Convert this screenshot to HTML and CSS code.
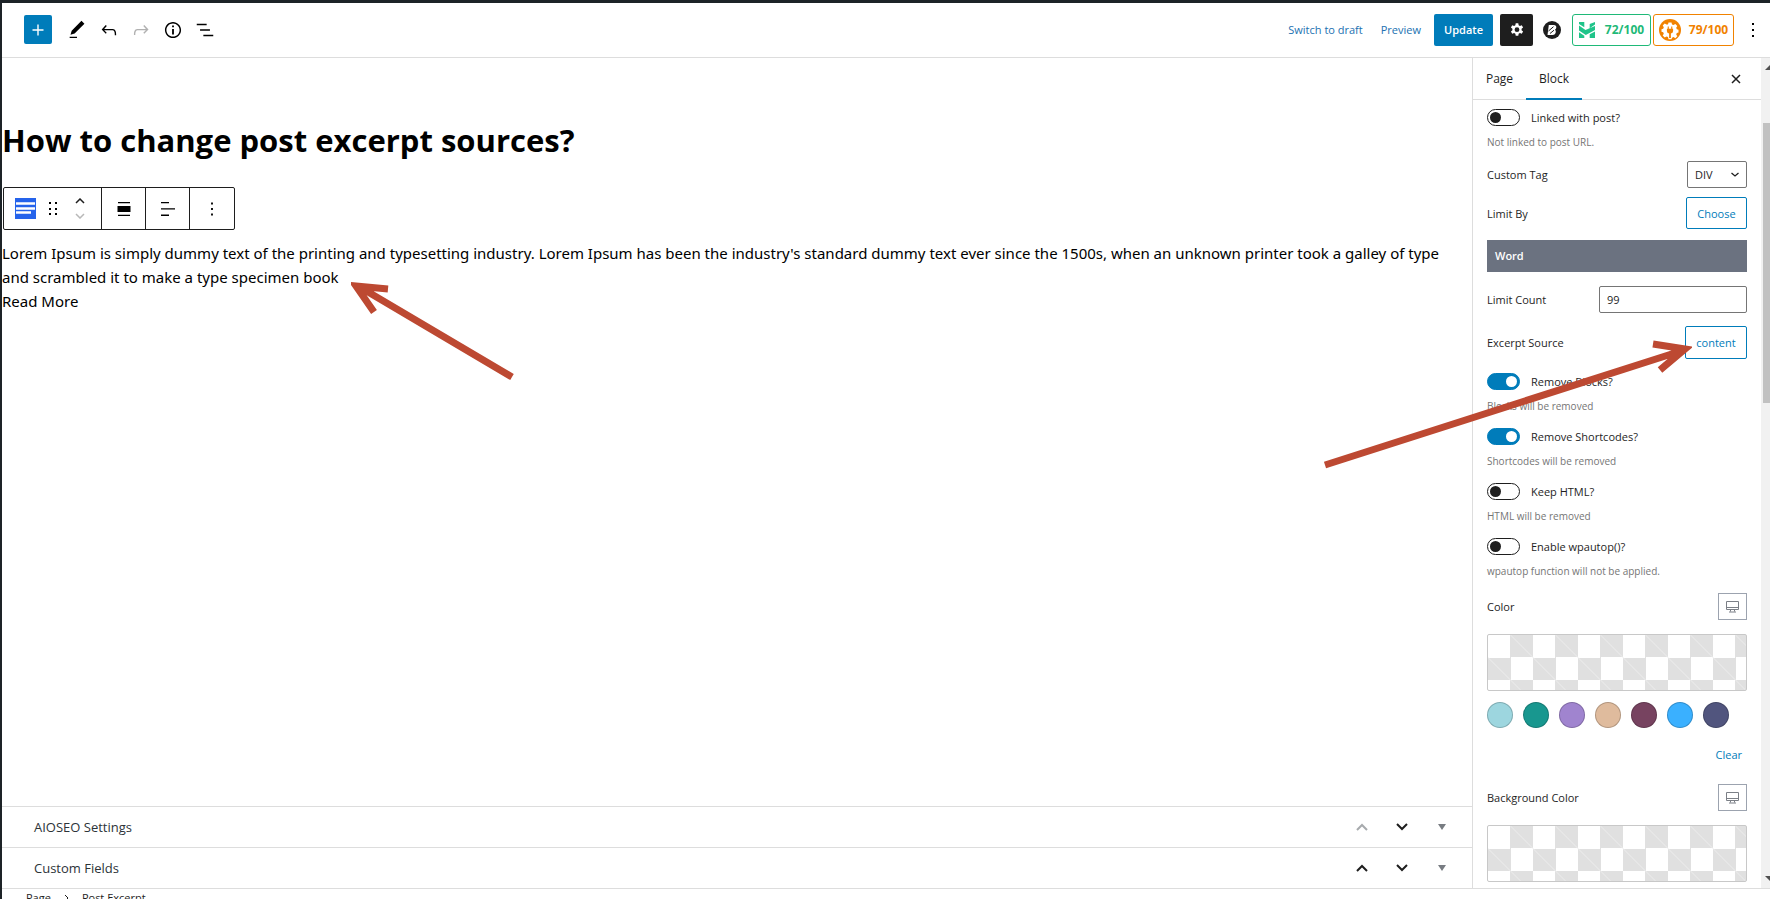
FILE: index.html
```html
<!DOCTYPE html>
<html lang="en">
<head>
<meta charset="utf-8">
<title>Edit Page</title>
<link rel="stylesheet" href="styles.css">
</head>
<body>
<div class="app">
  <header class="topbar">
    <div class="tools">
      <button class="inserter" aria-label="Add block"><svg viewBox="0 0 24 24" width="24" height="24"><path d="M17.500 11.300h-4.800V6.500h-1.400v4.800H6.500v1.400h4.800v4.800h1.400v-4.800h4.800z" fill="#fff"/></svg></button>
      <button class="tool" aria-label="Tools"><svg viewBox="0 0 24 24" width="22" height="22"><path d="M20.100 5.100L16.900 2 6.200 12.700l-1.300 4.400 4.500-1.300L20.100 5.100zM4 20.800h8v-1.500H4v1.500z"/></svg></button>
      <button class="tool" aria-label="Undo"><svg viewBox="0 0 24 24" width="22" height="22"><path d="M18.300 11.700c-.6-.6-1.400-.9-2.300-.9H6.700l2.900-3.300-1.100-1-4.500 5L8.500 16l1-1-2.700-2.700H16c.5 0 .9.200 1.300.5 1 1 1 3.400 1 4.500v.3h1.500v-.2c0-1.500 0-4.300-1.500-5.700z"/></svg></button>
      <button class="tool" aria-label="Redo" disabled><svg viewBox="0 0 24 24" width="22" height="22"><path d="M15.600 6.500l-1.100 1 2.900 3.300H8c-.9 0-1.700.3-2.300.9-1.400 1.500-1.400 4.200-1.400 5.600v.2h1.500v-.3c0-1.100 0-3.500 1-4.500.3-.3.7-.5 1.300-.5h9.200L14.500 15l1.100 1.100 4.600-4.600-4.600-5z"/></svg></button>
      <button class="tool" aria-label="Details"><svg viewBox="0 0 24 24" width="22" height="22"><path d="M12 3.200c-4.800 0-8.800 3.900-8.800 8.800 0 4.800 3.900 8.800 8.800 8.800 4.800 0 8.800-3.900 8.800-8.800 0-4.800-4-8.800-8.800-8.800zm0 16c-4 0-7.200-3.300-7.200-7.200C4.800 8 8 4.800 12 4.800s7.200 3.300 7.200 7.200c0 4-3.200 7.200-7.200 7.200zM11 17h2v-6h-2v6zm0-8h2V7h-2v2z"/></svg></button>
      <button class="tool" aria-label="List view"><svg viewBox="0 0 24 24" width="22" height="22"><path d="M13.800 5.200H3v1.500h10.800V5.200zm-3.600 12v1.500H21v-1.500H10.200zm7.200-6H6.600v1.500h10.800v-1.500z"/></svg></button>
    </div>
    <div class="actions">
      <a href="#" class="text-link">Switch to draft</a>
      <a href="#" class="text-link">Preview</a>
      <button class="update">Update</button>
      <button class="settings" aria-label="Settings"><svg viewBox="0 0 24 24" width="18" height="18"><path fill="#fff" fill-rule="evenodd" d="M10.300 3h3.400l.5 2.500 1.700 1 2.500-.9 1.700 3-2 1.700v2l2 1.700-1.700 3-2.500-.9-1.700 1-.5 2.500h-3.400l-.5-2.500-1.700-1-2.500.9-1.700-3 2-1.700v-2l-2-1.700 1.700-3 2.500.9 1.700-1zM12 8.300a3.200 3.200 0 1 0 0 6.400 3.200 3.200 0 0 0 0-6.400z"/></svg></button>
      <button class="round" aria-label="Blocks panel"><svg viewBox="0 0 18 18" width="18" height="18"><circle cx="9" cy="9" r="9" fill="#1e1e1e"/><path fill="#fff" d="M5.800 4h5q2.700.2 2.500 2.500-.1 1.500-1.300 2.200 1 .8.800 2.200-.4 3-3.300 3.100H4.500z"/><path d="M5.500 10l5-4.300M7 12.500l4-3.300" stroke="#1e1e1e" stroke-width="1"/></svg></button>
      <button class="score green"><svg viewBox="0 0 16 16" width="16" height="16"><path fill="#1fc48a" d="M0 0h5.300v5.200L0 2zM10.700 2L16 0v2.600l-5.300 3.600zM0 3.600l6.500 4.300L16 3.900v4L6.800 13 0 8.500zM0 10.300l5.300 3.500V16H0zM10.700 12.300L16 9.400V16h-5.300z"/></svg><span>72/100</span></button>
      <button class="score orange"><svg viewBox="0 0 22 22" width="22" height="22"><circle cx="11" cy="11" r="11" fill="#f18200"/><path fill="#fff" d="M9.500 3.500h3l.5 2 1.500.6 1.800-1.100 2 2-1.100 1.800.6 1.500 1.700.5v2.600l-1.700.5-.6 1.500 1.100 1.800-2 2-1.800-1.100-1.500.6-.5 1.500h-3L9 18.100l-1.500-.6-1.800 1.100-2-2 1.100-1.800-.6-1.500-1.700-.5v-2.600l1.700-.5.6-1.500-1.100-1.800 2-2 1.800 1.100L9 5.500z"/><path fill="#f18200" d="M8.700 7.500h1.100v2.300h2.400V7.500h1.100v2.300h.8v2.200q0 2-2.200 2.600V19h-1.800v-4.400Q7.900 14 7.900 12V9.800h.8z"/></svg><span>79/100</span></button>
      <button class="more" aria-label="Options"><svg viewBox="0 0 24 24" width="24" height="24"><path d="M13 19h-2v-2h2v2zm0-6h-2v-2h2v2zm0-6h-2V5h2v2z"/></svg></button>
    </div>
  </header>
  <div class="body">
    <main class="main">
      <div class="canvas">
        <h1 class="title">How to change post excerpt sources?</h1>
        <div class="block-toolbar">
          <div class="group first">
            <button class="tb-btn" aria-label="Post excerpt"><svg viewBox="0 0 21 21" width="21" height="21"><path fill="#2563eb" d="M0 0h21v21H0z"/><path d="M1 5.500h19M1 10.500h19M1 14.500h15" stroke="#fff" stroke-width="2.400"/></svg></button>
            <button class="tb-btn" aria-label="Drag"><svg viewBox="0 0 8 14" width="8" height="14"><path d="M0 0h2v2H0zM6 0h2v2H6zM0 6h2v2H0zM6 6h2v2H6zM0 11h2v2H0zM6 11h2v2H6z"/></svg></button>
            <div class="movers">
              <button class="tb-btn" aria-label="Move up"><svg viewBox="0 0 10 6" width="10" height="6"><path d="M1 5l4-4 4 4" fill="none" stroke="#1e1e1e" stroke-width="1.500"/></svg></button>
              <button class="tb-btn" aria-label="Move down" disabled><svg viewBox="0 0 10 6" width="10" height="6"><path d="M1 1l4 4 4-4" fill="none" stroke="#b8b8b8" stroke-width="1.500"/></svg></button>
            </div>
          </div>
          <div class="group"><button class="tb-btn" aria-label="Align"><svg viewBox="0 0 14 16" width="14" height="16"><path d="M1 1h12v1.300H1zM1 13.700h12V15H1zM.5 5h13v6H.5z"/></svg></button></div>
          <div class="group"><button class="tb-btn" aria-label="Align text"><svg viewBox="0 0 16 16" width="16" height="16"><path d="M1 1h8v1.300H1zM1 7.300h14v1.300H1zM1 13.600h8V15H1z"/></svg></button></div>
          <div class="group"><button class="tb-btn" aria-label="Options"><svg viewBox="0 0 24 24" width="22" height="22"><path d="M13 19h-2v-2h2v2zm0-6h-2v-2h2v2zm0-6h-2V5h2v2z"/></svg></button></div>
        </div>
        <div class="excerpt">Lorem Ipsum is simply dummy text of the printing and typesetting industry. Lorem Ipsum has been the industry's standard dummy text ever since the 1500s, when an unknown printer took a galley of type and scrambled it to make a type specimen book</div>
        <div class="excerpt">Read More</div>
      </div>
      <section class="metabox">
        <h2>AIOSEO Settings</h2>
        <button disabled aria-label="Move up"><svg viewBox="0 0 12 8" width="12" height="8"><path d="M1 7l5-5 5 5" fill="none" stroke="#a7aaad" stroke-width="2"/></svg></button>
        <button aria-label="Move down"><svg viewBox="0 0 12 8" width="12" height="8"><path d="M1 1l5 5 5-5" fill="none" stroke="#1e1e1e" stroke-width="2"/></svg></button>
        <button aria-label="Toggle"><svg viewBox="0 0 8 6" width="8" height="6"><path d="M0 0h8L4 6z" fill="#787c82"/></svg></button>
      </section>
      <section class="metabox">
        <h2>Custom Fields</h2>
        <button aria-label="Move up"><svg viewBox="0 0 12 8" width="12" height="8"><path d="M1 7l5-5 5 5" fill="none" stroke="#1e1e1e" stroke-width="2"/></svg></button>
        <button aria-label="Move down"><svg viewBox="0 0 12 8" width="12" height="8"><path d="M1 1l5 5 5-5" fill="none" stroke="#1e1e1e" stroke-width="2"/></svg></button>
        <button aria-label="Toggle"><svg viewBox="0 0 8 6" width="8" height="6"><path d="M0 0h8L4 6z" fill="#787c82"/></svg></button>
      </section>
    </main>
    <aside class="sidebar">
      <div class="tabs">
        <button class="tab">Page</button>
        <button class="tab active">Block</button>
        <button class="close" aria-label="Close settings"><svg viewBox="0 0 10 10" width="10" height="10"><path d="M1 1l8 8M9 1L1 9" stroke="#1e1e1e" stroke-width="1.500"/></svg></button>
      </div>
      <div class="panel">
        <label class="toggle"><input type="checkbox"><span>Linked with post?</span></label>
        <p class="help">Not linked to post URL.</p>
        <div class="field tag-row"><label for="tag">Custom Tag</label><span class="select-wrap"><select id="tag"><option>DIV</option></select><svg viewBox="0 0 8 5" width="8" height="5"><path d="M.5 1L4 4l3.500-3" fill="none" stroke="#1e1e1e" stroke-width="1.300"/></svg></span></div>
        <div class="field limit-row"><span>Limit By</span><button class="outline">Choose</button></div>
        <div class="chip">Word</div>
        <div class="field count-row"><label for="count">Limit Count</label><input id="count" class="count" type="text" value="99"></div>
        <div class="field source-row"><span>Excerpt Source</span><button class="outline">content</button></div>
        <label class="toggle"><input type="checkbox" checked><span>Remove Blocks?</span></label>
        <p class="help">Blocks will be removed</p>
        <label class="toggle"><input type="checkbox" checked><span>Remove Shortcodes?</span></label>
        <p class="help">Shortcodes will be removed</p>
        <label class="toggle"><input type="checkbox"><span>Keep HTML?</span></label>
        <p class="help">HTML will be removed</p>
        <label class="toggle"><input type="checkbox"><span>Enable wpautop()?</span></label>
        <p class="help">wpautop function will not be applied.</p>
        <div class="field color-row"><span>Color</span><button class="device" aria-label="Desktop"><svg viewBox="0 0 13 12" width="13" height="12"><path d="M.5.5h12v8H.5zM.5 6.500h12M4.500 8.500v2M8.500 8.500v2M3 11h7" fill="none" stroke="#7b7f86"/></svg></button></div>
        <button class="checker" aria-label="Pick color"></button>
        <div class="swatches">
          <button class="swatch c1" aria-label="Light blue"></button><button class="swatch c2" aria-label="Teal"></button><button class="swatch c3" aria-label="Purple"></button><button class="swatch c4" aria-label="Tan"></button><button class="swatch c5" aria-label="Plum"></button><button class="swatch c6" aria-label="Blue"></button><button class="swatch c7" aria-label="Indigo"></button>
        </div>
        <button class="clear">Clear</button>
        <div class="field color-row"><span>Background Color</span><button class="device" aria-label="Desktop"><svg viewBox="0 0 13 12" width="13" height="12"><path d="M.5.5h12v8H.5zM.5 6.500h12M4.500 8.500v2M8.500 8.500v2M3 11h7" fill="none" stroke="#7b7f86"/></svg></button></div>
        <button class="checker" aria-label="Pick background color"></button>
      </div>
    </aside>
    <div class="scrollbar"><svg viewBox="0 0 9 6" width="9" height="6"><path d="M0 6l5-5 5 5z" fill="#505050"/></svg><div class="thumb"></div><svg viewBox="0 0 9 6" width="9" height="6"><path d="M0 0h10L5 5z" fill="#505050"/></svg></div>
  </div>
  <footer class="crumbs"><span>Page</span><svg viewBox="0 0 5 8" width="5" height="8"><path d="M1 1l3 3-3 3" fill="none" stroke="#1e1e1e"/></svg><span>Post Excerpt</span></footer>
  <svg class="arrow arrow-left" viewBox="0 0 164 100" width="164" height="100"><path d="M161 95L12 7M37 7L5 4l18 26" fill="none" stroke="#bd4932" stroke-width="7"/></svg>
  <svg class="arrow arrow-right" viewBox="0 0 368 130" width="368" height="130"><path d="M1 126L357 12M329 5l32 5-25 21" fill="none" stroke="#bd4932" stroke-width="7"/></svg>
</div>
</body>
</html>
```
FILE: styles.css
```css
* { box-sizing: border-box; }
body { margin: 0; font-family: "Open Sans", "Noto Sans", sans-serif; font-size: 11px; color: #1e1e1e; background: #fff; }
button { font: inherit; color: inherit; background: none; border: 0; padding: 0; cursor: pointer; display: inline-flex; align-items: center; justify-content: center; }
svg { display: block; flex: none; }
.app { position: relative; height: 100vh; overflow: hidden; display: flex; flex-direction: column; border-top: 3px solid #1d2327; border-left: 2px solid #1d2327; }
.topbar { flex: none; height: 55px; display: flex; justify-content: space-between; align-items: center; border-bottom: 1px solid #ddd; padding: 0 5px 1px 22px; }
.tools { display: flex; align-items: center; gap: 8px; }
.inserter { width: 28px; height: 29px; background: #007cba; border-radius: 2px; margin-right: 5px; }
.tool { width: 24px; height: 24px; }
.tool:disabled { opacity: .3; }
.actions { display: flex; align-items: center; }
.text-link { color: #2271b1; text-decoration: none; margin-right: 18px; }
.update { background: #007cba; color: #fff; height: 32px; width: 59px; border-radius: 2px; margin-left: -5px; font-weight: 600; }
.settings { background: #1e1e1e; width: 33px; height: 32px; border-radius: 2px; margin: 0 10px 0 7px; }
.score { height: 32px; border: 1px solid; border-radius: 3px; font-weight: 700; font-size: 12px; }
.green { width: 79px; margin: 0 2px 0 11px; color: #1fb978; gap: 10px; }
.orange { width: 81px; color: #f18200; gap: 8px; }
.more { width: 24px; margin-left: 7px; }
.body { flex: 1; min-height: 0; display: flex; }
.main { flex: 1; min-width: 0; display: flex; flex-direction: column; }
.canvas { flex: 1; padding-top: 60px; color: #000; }
.title { margin: 0 0 25px; font-size: 31px; line-height: 44px; font-weight: 700; }
.block-toolbar { display: inline-flex; height: 43px; border: 1px solid #1e1e1e; border-radius: 2px; margin-left: 1px; }
.group { width: 44px; display: flex; align-items: center; justify-content: center; border-left: 1px solid #1e1e1e; }
.group.first { width: 97px; border-left: 0; gap: 13px; justify-content: flex-start; padding-left: 11px; }
.group:last-child { width: 45px; }
.movers { display: flex; flex-direction: column; gap: 9px; margin-left: 5px; }
.excerpt { font-family: "Noto Sans", sans-serif; font-size: 15px; line-height: 24px; padding-right: 12px; }
.block-toolbar + .excerpt { margin-top: 11px; }
.metabox { flex: none; height: 41px; border-top: 1px solid #ddd; display: flex; align-items: center; padding: 0 22px 0 32px; }
.metabox h2 { flex: 1; margin: 0; font-size: 13px; font-weight: 500; color: #2c3338; }
.metabox button { width: 16px; margin-left: 24px; }
.sidebar { width: 289px; flex: none; border-left: 1px solid #ddd; overflow: hidden; }
.tabs { height: 42px; display: flex; border-bottom: 1px solid #ddd; font-size: 12px; }
.tab { width: 53px; }
.tab.active { width: 56px; border-bottom: 2px solid #007cba; height: 42px; }
.close { margin-left: auto; margin-right: 20px; }
.panel { padding: 8px 14px 0; display: flex; flex-direction: column; }
.toggle { display: flex; align-items: center; gap: 11px; height: 18px; }
.toggle input { appearance: none; margin: 0; width: 33px; height: 17px; border: 1px solid #1e1e1e; border-radius: 9px; display: flex; align-items: center; padding: 0 2px; }
.toggle input::before { content: ""; width: 11px; height: 11px; border-radius: 50%; background: #1e1e1e; }
.toggle input:checked { background: #007cba; border-color: #007cba; justify-content: flex-end; }
.toggle input:checked::before { background: #fff; }
.help { margin: 8px 0 13px; font-size: 10px; line-height: 16px; color: #757575; }
.field { display: flex; justify-content: space-between; align-items: center; }
.tag-row { margin-top: -2px; }
.select-wrap { display: grid; align-items: center; }
.select-wrap > * { grid-area: 1 / 1; }
.select-wrap svg { justify-self: end; margin-right: 8px; pointer-events: none; }
select { appearance: none; width: 60px; height: 27px; border: 1px solid #757575; border-radius: 2px; background: #fff; font: inherit; color: inherit; padding: 0 7px; }
.outline { height: 32px; width: 61px; border: 1px solid #007cba; border-radius: 2px; color: #007cba; }
.limit-row { margin: 9px 0 11px; }
.chip { background: #6b7280; color: #fff; height: 32px; line-height: 32px; padding: 0 8px; font-weight: 600; }
.count-row { margin: 14px 0 13px; }
.count { width: 148px; height: 27px; border: 1px solid #757575; border-radius: 2px; font: inherit; color: inherit; padding: 0 7px; }
.source-row { margin-bottom: 13px; }
.source-row .outline { width: 62px; height: 33px; }
.color-row { margin-bottom: 14px; margin-top: 1px; }
.device { width: 29px; height: 27px; border: 1px solid #9ca3af; }
.checker { height: 57px; border: 1px solid #c8c8c8; border-radius: 2px; background: linear-gradient(to top right, transparent 24%, #ededed 25%, transparent 26%, transparent 74%, #ededed 75%, transparent 76%) 0 0 / 45px 45px, repeating-conic-gradient(#e0e0e0 0 25%, #fff 0 50%) 0 0 / 45px 45px; }
.swatches { display: flex; gap: 10px; margin-top: 11px; }
.swatch { width: 26px; height: 26px; border-radius: 50%; border: 1px solid rgba(0, 0, 0, .2); }
.c1 { background: #9dd6df; } .c2 { background: #18978f; } .c3 { background: #a084cf; } .c4 { background: #dfbb9d; } .c5 { background: #774360; } .c6 { background: #3ab0ff; } .c7 { background: #51557e; }
.clear { align-self: flex-end; color: #007cba; margin: 17px 5px 20px; height: 18px; }
.scrollbar { width: 9px; flex: none; background: #f1f1f1; display: flex; flex-direction: column; padding: 6px 0; }
.scrollbar svg { margin-left: 4px; }
.thumb { width: 7px; height: 280px; margin: 53px 0 auto 2px; background: #c1c1c1; }
.crumbs { flex: none; height: 11px; border-top: 1px solid #ddd; display: flex; align-items: flex-start; gap: 13px; padding-left: 24px; line-height: 16px; padding-top: 1px; }
.crumbs svg { margin-top: 4px; }
.arrow { position: absolute; pointer-events: none; }
.arrow-left { left: 349px; top: 279px; }
.arrow-right { left: 1322px; top: 336px; }
```
